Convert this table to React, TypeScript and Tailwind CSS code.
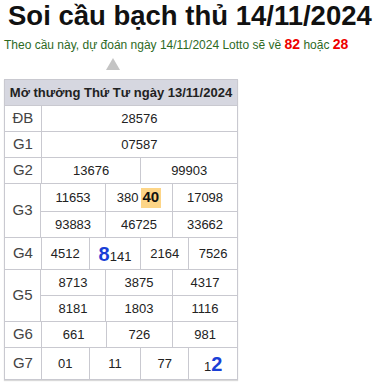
import React from "react";

const ff = { fontFamily: '"Liberation Sans", Arial, sans-serif' };

function Cell({ w, children, h = "h-[26px]" }: { w: string; children: React.ReactNode; h?: string }) {
  return (
    <div className={`${w} ${h} flex items-center justify-center border-r border-b border-[#c9c9d0] text-[13px] text-[#222]`}>
      {children}
    </div>
  );
}

function Label({ children, h }: { children: React.ReactNode; h: string }) {
  return (
    <div className={`w-[37px] ${h} flex items-center justify-center border-r border-b border-[#c9c9d0] text-[15px] text-[#444]`}>
      {children}
    </div>
  );
}

export default function App() {
  return (
    <div className="bg-white w-[375px] h-[388px] overflow-hidden" style={ff}>
      <h1 className="pl-[8px] text-[27.5px] leading-[32px] font-bold text-[#111] whitespace-nowrap">Soi cầu bạch thủ 14/11/2024</h1>
      <p className="pl-[4px] mt-[4px] text-[12px] leading-[16px] text-[#2d6a1f] whitespace-nowrap">
        Theo cầu này, dự đoán ngày 14/11/2024 Lotto sẽ về{" "}
        <b className="text-[14px] text-[#e00]">82</b> hoặc <b className="text-[14px] text-[#e00]">28</b>
      </p>
      <div className="pl-[106px] mt-[5px] h-[12px]">
        <div className="w-0 h-0 border-l-[7px] border-r-[7px] border-b-[12px] border-l-transparent border-r-transparent border-b-[#c4c4c4]" />
      </div>
      <div className="ml-[4px] mt-[9px] w-[234px] border-l border-t border-[#c9c9d0] shadow-[0_1px_1px_rgba(0,0,0,0.15)]">
        <div className="h-[26px] flex items-center justify-center border-r border-b border-[#c9c9d0] bg-[#d6d7e0] text-[13px] font-bold text-[#222]">
          Mở thưởng Thứ Tư ngày 13/11/2024
        </div>
        <div className="flex">
          <Label h="h-[26px]">ĐB</Label>
          <Cell w="w-[197px]">28576</Cell>
        </div>
        <div className="flex">
          <Label h="h-[26px]">G1</Label>
          <Cell w="w-[197px]">07587</Cell>
        </div>
        <div className="flex">
          <Label h="h-[26px]">G2</Label>
          <Cell w="w-[100px]">13676</Cell>
          <Cell w="w-[97px]">99903</Cell>
        </div>
        <div className="flex">
          <Label h="h-[54px]">G3</Label>
          <div className="flex flex-col">
            <div className="flex">
              <Cell w="w-[65px]" h="h-[28px]">11653</Cell>
              <Cell w="w-[67px]" h="h-[28px]">
                <span>380</span>
                <span className="ml-[2px] px-[2px] h-[20px] flex items-center bg-[#fdd587] font-bold text-[15px] text-[#111]">40</span>
              </Cell>
              <Cell w="w-[65px]" h="h-[28px]">17098</Cell>
            </div>
            <div className="flex">
              <Cell w="w-[65px]">93883</Cell>
              <Cell w="w-[67px]">46725</Cell>
              <Cell w="w-[65px]">33662</Cell>
            </div>
          </div>
        </div>
        <div className="flex">
          <Label h="h-[32px]">G4</Label>
          <Cell w="w-[48px]" h="h-[32px]">4512</Cell>
          <Cell w="w-[52px]" h="h-[32px]">
            <span className="flex items-baseline">
              <b className="text-[20px] text-[#1a3fd6]">8</b>
              <span>141</span>
            </span>
          </Cell>
          <Cell w="w-[48px]" h="h-[32px]">2164</Cell>
          <Cell w="w-[49px]" h="h-[32px]">7526</Cell>
        </div>
        <div className="flex">
          <Label h="h-[52px]">G5</Label>
          <div className="flex flex-col">
            <div className="flex">
              <Cell w="w-[65px]">8713</Cell>
              <Cell w="w-[67px]">3875</Cell>
              <Cell w="w-[65px]">4317</Cell>
            </div>
            <div className="flex">
              <Cell w="w-[65px]">8181</Cell>
              <Cell w="w-[67px]">1803</Cell>
              <Cell w="w-[65px]">1116</Cell>
            </div>
          </div>
        </div>
        <div className="flex">
          <Label h="h-[26px]">G6</Label>
          <Cell w="w-[65px]">661</Cell>
          <Cell w="w-[67px]">726</Cell>
          <Cell w="w-[65px]">981</Cell>
        </div>
        <div className="flex">
          <Label h="h-[32px]">G7</Label>
          <Cell w="w-[48px]" h="h-[32px]">01</Cell>
          <Cell w="w-[52px]" h="h-[32px]">11</Cell>
          <Cell w="w-[48px]" h="h-[32px]">77</Cell>
          <Cell w="w-[49px]" h="h-[32px]">
            <span className="flex items-baseline">
              <span>1</span>
              <b className="text-[20px] text-[#1a3fd6]">2</b>
            </span>
          </Cell>
        </div>
      </div>
    </div>
  );
}
